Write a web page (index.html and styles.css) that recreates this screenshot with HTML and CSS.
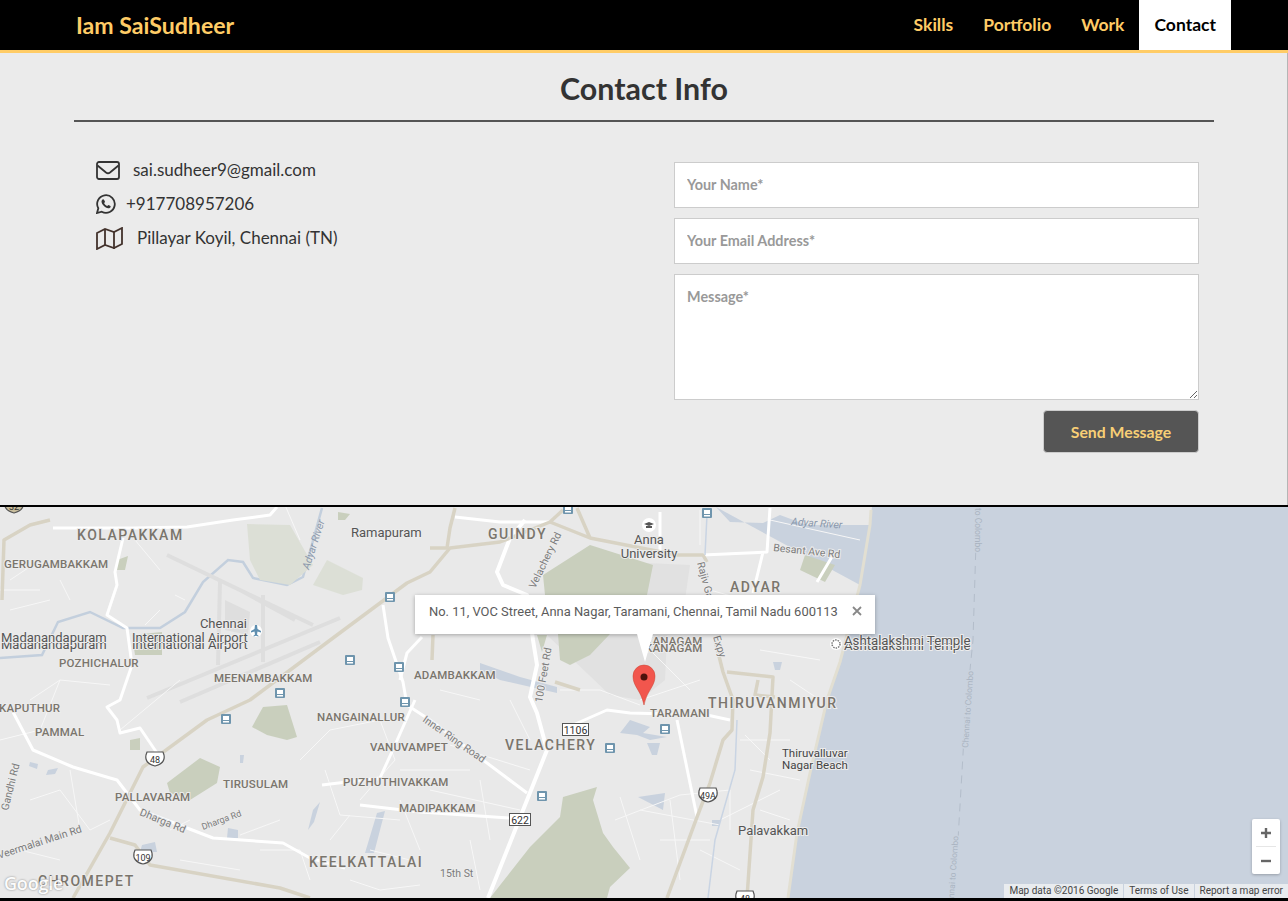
FILE: index.html
```html
<!DOCTYPE html>
<html lang="en">
<head>
<meta charset="utf-8">
<title>Iam SaiSudheer</title>
<link rel="stylesheet" href="styles.css">
</head>
<body>
<header class="topbar">
  <a class="brand" href="#">Iam SaiSudheer</a>
  <nav class="nav">
    <a href="#">Skills</a>
    <a href="#">Portfolio</a>
    <a href="#">Work</a>
    <a class="active" href="#">Contact</a>
  </nav>
</header>
<section class="contact">
  <h1 class="title">Contact Info</h1>
  <div class="columns">
    <ul class="info">
      <li>
        <svg class="ic ic-mail" viewBox="0 0 24 19"><rect x="1" y="1" width="22" height="17" rx="2"/><path d="M1.500 4.500 10 11.500q2 1.500 4 0L22.500 4.500"/></svg>
        <span>sai.sudheer9@gmail.com</span>
      </li>
      <li>
        <svg class="ic ic-wa" viewBox="0 0 20 20"><path d="M1 19l1.300-4.700A8.800 8.800 0 1 1 5.700 17.700z"/><path class="fill" d="M7 5.200c-.5 0-1.500.9-1.500 2.400 0 2.700 3.700 6.700 6.700 6.700 1.500 0 2.500-1 2.500-1.900 0-.5-2-1.500-2.400-1.500-.4 0-.8 1.100-1.200 1.100-.9 0-3-2-3-2.900 0-.4.9-.8.9-1.200 0-.4-.9-2.700-2-2.700z"/></svg>
        <span>+917708957206</span>
      </li>
      <li>
        <svg class="ic ic-map" viewBox="0 0 27 23"><path d="M1 6 9 2l9 3 8-4v16l-8 4-9-3-8 4z"/><path d="M9 2v17M18 5v17"/></svg>
        <span>Pillayar Koyil, Chennai (TN)</span>
      </li>
    </ul>
    <form class="form">
      <input class="field" type="text" placeholder="Your Name*">
      <input class="field" type="text" placeholder="Your Email Address*">
      <textarea class="field area" placeholder="Message*"></textarea>
      <button class="send" type="button">Send Message</button>
    </form>
  </div>
</section>
<section class="map">
  <svg class="canvas" viewBox="0 507 1288 391" width="1288" height="391">
    <defs>
      <g id="bus"><rect x="-5" y="-5" width="10" height="10" rx="1" class="bus-b"/><rect x="-3" y="-3" width="6" height="4" class="bus-w"/><rect x="-3" y="2" width="6" height="1.500" class="bus-w"/></g>
      <path id="shield" d="M-8-7h16l1 3c1 5-1 9-9 11C-8 5-10 1-9-4z"/>
    </defs>
    <rect x="0" y="507" width="1288" height="391" class="land"/>
    <path class="campus" d="M547 635H667L665 680 640 700 610 695zM580 560 690 565 680 634H590z"/>
    <path class="water" d="M716 507 730 522 763 523 780 515 807 525 870 525 872 507H1288V898H788L797 833 810 773 827 700 840 662 860 585z"/>
    <path class="coast" d="M871 510 870 525 860 585 840 662 827 700 810 773 797 833 788 898"/>
    <path class="river" d="M0 658 42 655 58 622 90 612 123 628 160 628 185 612 203 582 228 560 243 562 253 578 287 585 303 577 322 508"/>
    <path class="water" d="M620 733 630 720 650 727 643 733 667 737 650 740 637 735zM647 743H660L657 755H652zM638 797 665 793 663 810zM480 663 520 677 557 687V693L500 680 480 670zM385 811 377 813 365 853H374L380 830zM320 802 313 810 308 830 314 822zM30 762 38 764 37 769 29 766zM48 770 58 768 55 774 46 775zM142 845 155 842 157 852 140 852zM228 828 238 830 238 838 227 838zM240 755 244 755 243 763 240 763zM712 820H720V826H712zM773 662H782L780 670H775z"/>
    <path class="green" d="M543 575 590 545 653 565 647 595H545zM537 635H547L542 652zM558 634H610L590 655 570 665 560 660zM563 797 597 787 593 800 603 833 613 847 630 868 610 887 607 898H490L530 847 560 817zM167 783 200 758 220 767 217 783 190 800 170 793zM252 727 263 707 287 705 297 737 287 740 267 735zM805 555 835 565 825 582 800 570zM117 560 128 556 125 570 116 570zM132 635 162 632 162 655 135 655zM130 740 140 738 140 750 130 750zM338 512 350 514 345 520 338 520z"/>
    <path class="green-l" d="M247 524 290 525 313 565 290 585 260 580 250 560zM313 585 327 560 363 578 362 590 343 595z"/>
    <g class="runway">
      <path d="M167 555 313 625M220 582 218 665M263 595 263 662M340 618 147 698M320 642 180 702M240 590 295 620"/>
      <path class="terminal" d="M225 600 250 612 248 635 225 630z"/>
    </g>
    <path class="thin" d="M0 590H40M10 610 50 600M60 580 70 600M145 625 160 610M175 595 185 600M30 700 60 680 110 685M0 740 40 730 60 680M120 730 180 680M30 800 60 790 90 830 110 820M70 770 80 830M170 830 190 820M240 835 280 820M300 760 330 730 380 720 395 760 360 800M325 770 340 815 400 820M330 840 350 815M400 800 420 850M370 850 410 860M560 690 600 690 640 705M440 690 480 700M615 820 680 795 730 790 730 830M620 797 640 860M660 840 710 840M640 810 720 825M670 800 680 880M700 850 740 870M720 820 780 790M760 810 790 820M750 770 800 780M740 740 790 740M790 680 820 700M650 650 690 690M700 610 790 615M710 590 815 620M760 650 820 660M745 735 770 760M770 520 860 540M700 545 700 510M640 700 700 680M510 700 530 740M450 745 530 770M430 790 520 810M400 770 470 770M480 780 490 840M470 840 480 890M20 850 60 860M180 860 240 870M260 850 300 850 310 880M350 880 380 890 420 885M10 580 40 560M135 540 160 570M285 505 300 540"/>
    <g class="road-w">
      <path d="M53 528H133L187 527 233 520 270 515 277 507"/>
      <path d="M123 538 115 572 117 585 107 615 127 628 132 665 120 700 107 707 117 720 120 733 140 728 157 753"/>
      <path d="M13 712 33 750 73 767 110 778 117 780 140 810 187 828 213 838 283 843 310 858 345 868"/>
      <path d="M383 605 388 638 403 682 407 705 430 720 483 760 527 793"/>
      <path d="M422 637 407 653 400 680"/>
      <path d="M322 785 380 778 395 745 415 700"/>
      <path d="M360 805 420 812 509 818"/>
      <path d="M573 725 607 710 630 713 707 715 730 720"/>
      <path d="M677 720 697 817"/>
      <path d="M660 512V552M703 555 767 552 770 508M763 552 753 593M833 555 817 582"/>
      <path d="M455 517 500 522 550 522"/>
    </g>
    <path class="road-w wide" d="M488 898 547 750 537 713 530 697 537 665 533 640 527 595 503 585 497 572 510 538 525 520"/>
    <g class="road-h">
      <path d="M73 898 110 833 143 767 207 720 250 700 333 638 407 583 430 572 450 548 500 542 550 522 563 510"/>
      <path d="M110 838 135 845 150 865 280 888 310 898"/>
      <path d="M2 600 4 540 30 525 50 520"/>
      <path d="M455 508 450 528 447 548 430 548"/>
      <path d="M550 522 590 538 577 508M590 538 677 555 703 555 707 562"/>
      <path d="M715 640 723 672 733 700 732 730 723 740 710 783 697 817 667 898"/>
      <path d="M727 672 773 677 770 733 763 777 753 810 747 898"/>
      <path d="M758 680 755 695 775 697"/>
      <path d="M433 635 432 660M555 682 580 690"/>
    </g>
    <path class="rail" d="M707 515 705 555M737 720 735 770 715 840 708 898"/>
    <path class="ferry" d="M977 510 973 640 965 720 958 840 952 898"/>
    <g class="place">
      <text x="77" y="540" class="big">KOLAPAKKAM</text>
      <text x="488" y="539" class="big">GUINDY</text>
      <text x="730" y="592" class="big">ADYAR</text>
      <text x="708" y="708" class="big">THIRUVANMIYUR</text>
      <text x="505" y="750" class="big">VELACHERY</text>
      <text x="309" y="867" class="big">KEELKATTALAI</text>
      <text x="38" y="886" class="big">CHROMEPET</text>
      <text x="4" y="568" class="mid">GERUGAMBAKKAM</text>
      <text x="59" y="667" class="mid">POZHICHALUR</text>
      <text x="214" y="682" class="mid">MEENAMBAKKAM</text>
      <text x="414" y="679" class="mid">ADAMBAKKAM</text>
      <text x="650" y="717" class="mid">TARAMANI</text>
      <text x="317" y="721" class="mid">NANGAINALLUR</text>
      <text x="370" y="751" class="mid">VANUVAMPET</text>
      <text x="343" y="786" class="mid">PUZHUTHIVAKKAM</text>
      <text x="399" y="812" class="mid">MADIPAKKAM</text>
      <text x="223" y="788" class="mid">TIRUSULAM</text>
      <text x="115" y="801" class="mid">PALLAVARAM</text>
      <text x="35" y="736" class="mid">PAMMAL</text>
      <text x="-1" y="712" class="mid">KAPUTHUR</text>
      <text x="645" y="645" class="mid">KANAGAM</text>
      <text x="645" y="652" class="mid">KANAGAM</text>
    </g>
    <g class="poi">
      <text x="351" y="537">Ramapuram</text>
      <text x="1" y="649">Madanandapuram</text>
      <text x="1" y="642">Madanandapuram</text>
      <text x="247" y="628" class="end">Chennai</text>
      <text x="132" y="649">International Airport</text>
      <text x="132" y="642">International Airport</text>
      <text x="649" y="544" class="mids">Anna</text>
      <text x="649" y="558" class="mids">University</text>
      <text x="844" y="650" class="wide-t">Ashtalakshmi Temple</text>
      <text x="844" y="645" class="wide-t">Ashtalakshmi Temple</text>
      <text x="738" y="835">Palavakkam</text>
      <text x="782" y="757" class="small">Thiruvalluvar</text>
      <text x="782" y="769" class="small">Nagar Beach</text>
    </g>
    <g class="street">
      <text transform="translate(535 589) rotate(-64)">Velachery Rd</text>
      <text transform="translate(697 563) rotate(75)">Rajiv Gandhi</text>
      <text transform="translate(713 637) rotate(72)">Expy</text>
      <text transform="translate(773 551) rotate(6)">Besant Ave Rd</text>
      <text transform="translate(542 703) rotate(-80)">100 Feet Rd</text>
      <text transform="translate(422 721) rotate(35)">Inner Ring Road</text>
      <text transform="translate(139 815) rotate(22)">Dharga Rd</text>
      <text transform="translate(203 830) rotate(-20)" class="tiny">Dharga Rd</text>
      <text transform="translate(8 811) rotate(-76)">Gandhi Rd</text>
      <text transform="translate(-1 859) rotate(-18)">Veermalai Main Rd</text>
      <text x="440" y="877" class="flat">15th St</text>
    </g>
    <g class="water-t">
      <text transform="translate(309 570) rotate(-72)">Adyar River</text>
      <text transform="translate(791 525) rotate(4)">Adyar River</text>
    </g>
    <g class="sea-t">
      <text transform="translate(975 508) rotate(90)">to Colombo</text>
      <text transform="translate(968 748) rotate(-86)">Chennai to Colombo</text>
      <text transform="translate(953 913) rotate(-86)">Chennai to Colombo</text>
    </g>
    <g class="icons">
      <use href="#bus" x="390" y="597"/><use href="#bus" x="350" y="660"/><use href="#bus" x="399" y="667"/>
      <use href="#bus" x="280" y="693"/><use href="#bus" x="405" y="702"/><use href="#bus" x="226" y="719"/>
      <use href="#bus" x="665" y="729"/><use href="#bus" x="610" y="748"/><use href="#bus" x="542" y="796"/>
      <use href="#bus" x="568" y="509"/><use href="#bus" x="707" y="513"/>
    </g>
    <circle cx="256" cy="631" r="6" class="poi-c"/><path d="M255 625h2l.5 4 3.500 2v1.500l-3.500-1-.5 3 1.500 1.200v.8l-2.500-.7-2.500.7v-.8l1.500-1.200-.5-3-3.500 1V631l3.500-2z" class="poi-a"/>
    <circle cx="649" cy="525" r="7" class="poi-c"/><path d="M644 524l5-2 5 2-5 2zM646 526v2h6v-2" class="poi-g"/>
    <circle cx="836" cy="644" r="6" class="poi-c"/><circle cx="836" cy="644" r="4" class="poi-r"/>
    <g class="shield-g">
      <g transform="translate(155 759)"><use href="#shield"/><text y="4">48</text></g>
      <g transform="translate(143 857)"><use href="#shield"/><text y="4">109</text></g>
      <g transform="translate(708 795)"><use href="#shield"/><text y="4">49A</text></g>
      <g transform="translate(745 898)"><use href="#shield"/><text y="4">48</text></g>
      <g transform="translate(14 506)"><use href="#shield" class="tan"/><text y="4">32</text></g>
    </g>
    <g class="sign">
      <rect x="562.500" y="723.500" width="26" height="12"/><text x="575.500" y="733.500">1106</text>
      <rect x="509.500" y="813.500" width="21" height="12"/><text x="520" y="823.500">622</text>
    </g>
    <path class="pin" d="M644 705C641 690 633 687 633 676a11 11 0 0 1 22 0C655 687 647 690 644 705z"/>
    <circle class="pin-dot" cx="644" cy="677" r="3.500"/>
  </svg>
  <div class="bubble">
    <span class="bubble-text">No. 11, VOC Street, Anna Nagar, Taramani, Chennai, Tamil Nadu 600113</span>
    <svg class="bubble-x" viewBox="0 0 10 10"><path d="M1 1l8 8M9 1l-8 8"/></svg>
  </div>
  <div class="tail"></div>
  <span class="google">Google</span>
  <div class="zoom">
    <svg class="zoom-ic" viewBox="0 0 12 12"><path d="M6 1v10M1 6h10"/></svg>
    <span class="zoom-sep"></span>
    <svg class="zoom-ic" viewBox="0 0 12 12"><path d="M1 6h10"/></svg>
  </div>
  <div class="attrib">
    <span>Map data ©2016 Google</span>
    <span>Terms of Use</span>
    <span>Report a map error</span>
  </div>
</section>
</body>
</html>
```
FILE: styles.css
```css
* { box-sizing: border-box; }
html, body { margin: 0; padding: 0; }
body { width: 1288px; height: 901px; overflow: hidden; background: #ebebeb; font-family: Lato, sans-serif; color: #333; }

.topbar { height: 53px; background: #000; border-bottom: 3px solid #fc6; display: flex; justify-content: space-between; padding: 0 57px 0 76px; }
.brand { font-size: 23.100px; font-weight: 700; line-height: 50px; color: #fc6; text-decoration: none; }
.nav { display: flex; }
.nav a { font-size: 17.500px; font-weight: 700; line-height: 50px; padding: 0 15px; color: #fc6; text-decoration: none; }
.nav a.active { background: #fff; color: #000; }

.contact { height: 452px; padding: 0 73px 0 74px; border-right: 1px solid #b5b5b5; }
.title { margin: 0; height: 69px; border-bottom: 2px solid #555; font-size: 30.400px; font-weight: 700; line-height: 70px; text-align: center; color: #333; }
.columns { display: flex; justify-content: space-between; padding: 31px 15px 0 22px; }

.info { list-style: none; margin: 0; padding: 0; }
.info li { display: flex; align-items: center; height: 34px; font-size: 17px; color: #333; }
.info span { margin-top: -2px; }
.ic { fill: none; stroke: #333; stroke-width: 1.800; display: block; }
.ic-mail { width: 24px; height: 19px; margin-right: 13px; }
.ic-wa { width: 20px; height: 20px; margin-right: 10px; }
.ic-wa .fill { fill: #333; stroke: none; }
.ic-map { width: 27px; height: 23px; margin-right: 14px; stroke: #43322c; }

.form { width: 525px; margin-top: 9px; display: flex; flex-direction: column; align-items: flex-end; gap: 10px; }
.field { display: block; width: 525px; height: 46px; padding: 0 12px 2px; border: 1px solid #ccc; border-radius: 0; background: #fff; font-family: Lato, sans-serif; font-size: 14.400px; font-weight: 700; color: #555; }
.field::placeholder { color: #999; opacity: 1; }
.area { height: 126px; padding-top: 13px; resize: vertical; }
.send { width: 156px; height: 43px; border: 1px solid #ccc; border-radius: 4px; background: #555; color: #f8cf76; font-family: Lato, sans-serif; font-size: 15.800px; font-weight: 700; }

.map { position: relative; height: 396px; border-top: 2px solid #000; border-bottom: 3px solid #000; overflow: hidden; background: #e9e9e9; }
.canvas { display: block; font-family: Roboto, sans-serif; }
.land { fill: #e9e9e9; }
.campus { fill: #e1e1e1; }
.water { fill: #c9d2de; }
.coast { fill: none; stroke: #e2dfd2; stroke-width: 3; }
.river { fill: none; stroke: #c3cfdd; stroke-width: 2.500; }
.green { fill: #c9cfbd; }
.green-l { fill: #dcdfd6; }
.runway { fill: none; stroke: #dedede; stroke-width: 4; }
.terminal { fill: #dedede; stroke: none; }
.thin { fill: none; stroke: #f7f7f7; stroke-width: 1; }
.road-w { fill: none; stroke: #fff; stroke-width: 3; stroke-linejoin: round; }
.road-w.wide { stroke-width: 4; }
.road-h { fill: none; stroke: #d8d3c4; stroke-width: 3.500; stroke-linejoin: round; }
.rail { fill: none; stroke: #c9d4e3; stroke-width: 1.500; }
.ferry { fill: none; stroke: #b3bdca; stroke-width: 1; stroke-dasharray: 8 6; }

.place text, .poi text, .street text, .sign text { paint-order: stroke; stroke: #ececec; stroke-width: 2px; }
.place text { fill: #7a756c; font-weight: 500; }
.place .big { font-size: 14px; letter-spacing: 1.500px; }
.place .mid { font-size: 11.500px; letter-spacing: .2px; }
.poi text { fill: #555; font-size: 13px; }
.poi .end { text-anchor: end; }
.poi .mids { text-anchor: middle; }
.poi .small { font-size: 11.500px; fill: #444; }
.poi .wide-t { font-size: 13.200px; }
.street text { fill: #7c7c7c; font-size: 10.500px; }
.street .tiny { font-size: 9px; }
.water-t text { fill: #8a98ac; font-size: 10.500px; font-style: italic; }
.sea-t text { fill: #aab4c1; font-size: 8.500px; paint-order: stroke; stroke: #c9d2de; stroke-width: 3px; }
.bus-b { fill: #6f95ad; }
.bus-w { fill: #fff; }
.poi-c { fill: #fff; }
.poi-a { fill: #5f8fb0; }
.poi-g { fill: #555; }
.poi-r { fill: none; stroke: #777; stroke-width: 1.500; stroke-dasharray: 1.500 1; }
.shield-g use { fill: #fff; stroke: #555; stroke-width: 1.200; }
.shield-g use.tan { fill: #c8bd9c; }
.shield-g text { font-size: 9px; fill: #333; text-anchor: middle; }
.sign rect { fill: #fff; stroke: #555; }
.sign text { font-size: 10.500px; fill: #333; text-anchor: middle; stroke: none; }
.pin { fill: #f2564d; stroke: #c9402f; stroke-width: .5; }
.pin-dot { fill: #4d120c; }

.bubble { position: absolute; left: 415px; top: 88px; width: 460px; height: 39px; padding: 9px 0 0 14px; background: #fff; box-shadow: 0 1px 4px rgba(0,0,0,.3); font-family: Roboto, sans-serif; font-size: 12.930px; line-height: 16px; color: #5b5b5b; white-space: nowrap; }
.bubble-x { position: absolute; left: 437px; top: 11px; width: 10px; height: 10px; fill: none; stroke: #888; stroke-width: 1.800; }
.tail { position: absolute; left: 637px; top: 127px; width: 0; height: 0; border-left: 8px solid transparent; border-right: 8px solid transparent; border-top: 28px solid #fff; }
.google { position: absolute; left: 4px; top: 365px; font-family: "Open Sans", sans-serif; font-size: 18px; font-weight: 600; line-height: 22px; letter-spacing: -.2px; color: #fff; opacity: .9; text-shadow: 0 0 2px rgba(0,0,0,.5); }
.zoom { position: absolute; left: 1252px; top: 312px; width: 28px; height: 55px; display: flex; flex-direction: column; align-items: center; background: #fff; border-radius: 2px; box-shadow: 0 1px 3px rgba(0,0,0,.25); }
.zoom-ic { width: 12px; height: 12px; margin: 8px 0 7px; fill: none; stroke: #666; stroke-width: 2.400; }
.zoom-sep { width: 20px; height: 1px; background: #e6e6e6; }
.attrib { position: absolute; right: 0; bottom: 0; height: 14px; display: flex; gap: 1px; font-family: Roboto, sans-serif; font-size: 10px; line-height: 14px; color: #444; white-space: nowrap; }
.attrib span { padding: 0 5px; background: rgba(245,245,245,.72); }
```
